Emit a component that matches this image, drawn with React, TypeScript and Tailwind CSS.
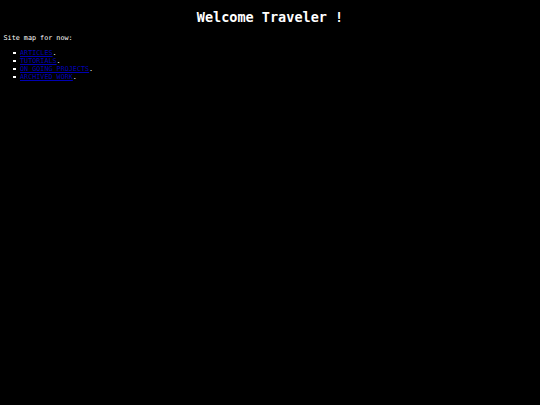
export default function App() {
  const items = ["ARTICLES", "TUTORIALS", "ON GOING PROJECTS", "ARCHIVED WORK"];
  return (
    <div className="min-h-[405px] w-full bg-black text-white px-[3.5px]" style={{ fontFamily: '"DejaVu Sans Mono", monospace' }}>
      <h1 className="text-center text-[13.5px] font-bold leading-[16px] pt-[9px] pb-[9px]">Welcome Traveler !</h1>
      <p className="text-[6.75px] leading-[8px]">Site map for now:</p>
      <ul className="pl-[16.5px] mt-[6.75px] text-[6.75px] leading-[8px]">
        {items.map((t) => (
          <li key={t} className="relative">
            <span className="absolute left-[-7px] top-[3px] w-[2.5px] h-[2.5px] bg-white" />
            <a href="#" className="text-[#0000b4] underline">{t}</a>.
          </li>
        ))}
      </ul>
    </div>
  );
}
